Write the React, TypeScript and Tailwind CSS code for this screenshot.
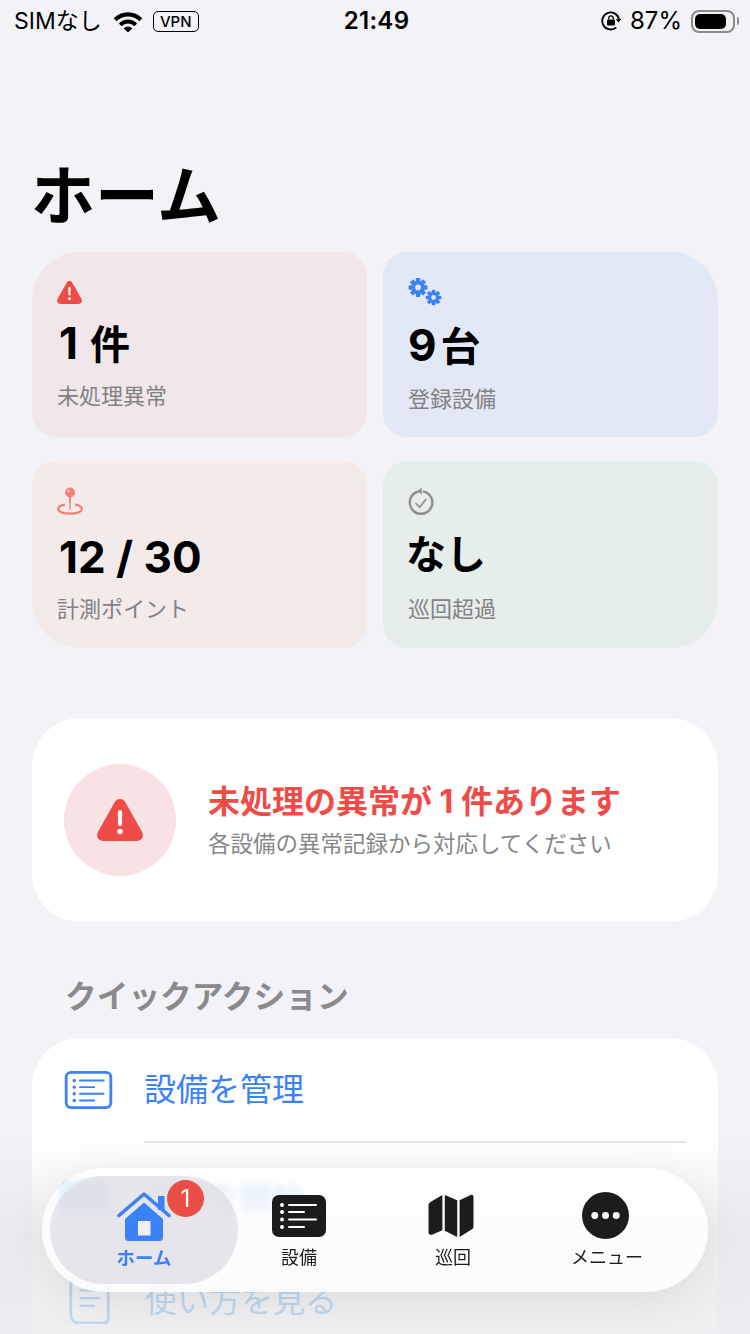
import React from 'react'

const font = 'Inter, "Noto Sans CJK JP", sans-serif'

const TriangleIcon = ({ className }: { className: string }) => (
  <svg viewBox="0 0 46 42" className={className}>
    <path
      d="M23 0c-2.400 0-4.200 1.200-5.500 3.400L1.200 32.600C-1.400 37.200 1.200 42 6.200 42h33.600c5 0 7.600-4.800 5-9.400L28.500 3.400C27.200 1.200 25.400 0 23 0z"
      fill="currentColor"
    />
    <rect x="20.900" y="11" width="4.200" height="16" rx="2.100" fill="white" fillOpacity="0.95" />
    <circle cx="23" cy="32.500" r="2.800" fill="white" fillOpacity="0.95" />
  </svg>
)

const Gear = ({ cx, cy, r }: { cx: number; cy: number; r: number }) => (
  <g>
    {[0, 45, 90, 135].map((a) => (
      <rect
        key={a}
        x={cx - r * 0.28}
        y={cy - r * 1.18}
        width={r * 0.56}
        height={r * 2.36}
        rx={r * 0.12}
        transform={`rotate(${a} ${cx} ${cy})`}
        fill="currentColor"
      />
    ))}
    <circle cx={cx} cy={cy} r={r * 0.85} fill="currentColor" />
    <circle cx={cx} cy={cy} r={r * 0.36} fill="#e2e8f5" />
  </g>
)

const GearsIcon = () => (
  <svg viewBox="0 0 34 28" className="h-[28px] w-[34px] text-[#3b82f6]">
    <Gear cx={10} cy={9.500} r={8} />
    <Gear cx={25.500} cy={19.500} r={6.600} />
  </svg>
)

const PinIcon = () => (
  <svg viewBox="0 0 26 28" className="h-[28px] w-[26px] text-[#f47f78]">
    <circle cx="13" cy="5.500" r="5" fill="currentColor" />
    <circle cx="11.500" cy="4" r="1.200" fill="#fbd5d2" />
    <path d="M11.900 9h2.200l-.6 14h-1z" fill="currentColor" />
    <path
      d="M8 17.600C3.500 18.400 1.200 20 1.200 22c0 2.800 5.200 4.700 11.800 4.700S24.800 24.800 24.800 22c0-2-2.300-3.600-6.800-4.400"
      fill="none"
      stroke="currentColor"
      strokeWidth="2.200"
    />
  </svg>
)

const TimerCheckIcon = () => (
  <svg viewBox="0 0 26 28" className="h-[28px] w-[26px] text-[#8e9190]">
    <path d="M9.500 4.800A11.300 11.300 0 1 0 16 4.600" fill="none" stroke="currentColor" strokeWidth="2.500" strokeLinecap="round" />
    <path d="M13.500 0.500 9.500 4.500l4.500 3z" fill="currentColor" />
    <path d="M8 16.500l3.700 3.800 6.300-8" fill="none" stroke="currentColor" strokeWidth="1.700" strokeLinecap="round" strokeLinejoin="round" />
  </svg>
)

const ListOutline = () => (
  <svg viewBox="0 0 50 40" className="h-[38px] w-[49px]">
    <rect x="1.500" y="1.500" width="47" height="37" rx="5" fill="none" stroke="currentColor" strokeWidth="3" />
    <g fill="currentColor">
      <circle cx="10" cy="10" r="1.800" />
      <circle cx="10" cy="17" r="1.800" />
      <circle cx="10" cy="24" r="1.800" />
      <circle cx="10" cy="31" r="1.800" />
      <rect x="15" y="9" width="27" height="2" rx="1" />
      <rect x="15" y="16" width="17" height="2" rx="1" />
      <rect x="15" y="23" width="27" height="2" rx="1" />
      <rect x="15" y="30" width="17" height="2" rx="1" />
    </g>
  </svg>
)

const ListSolid = () => (
  <svg viewBox="0 0 54 42" className="h-[42px] w-[54px] text-[#1c1c1e]">
    <rect width="54" height="42" rx="7" fill="currentColor" />
    <g fill="white">
      <circle cx="10" cy="10" r="2" />
      <circle cx="10" cy="17" r="2" />
      <circle cx="10" cy="24.500" r="2" />
      <circle cx="10" cy="32" r="2" />
      <rect x="16" y="9" width="29" height="2" rx="1" />
      <rect x="16" y="16" width="17" height="2" rx="1" />
      <rect x="16" y="23.500" width="29" height="2" rx="1" />
      <rect x="16" y="31" width="17" height="2" rx="1" />
    </g>
  </svg>
)

const BookIcon = () => (
  <svg viewBox="0 0 50 48" className="h-[46px] w-[50px]">
    <path d="M4 3a4 4 0 0 1 4-2h31a4 4 0 0 1 4 4v38a4 4 0 0 1-4 4H12a8 8 0 0 1-8-8z" fill="none" stroke="currentColor" strokeWidth="3" />
    <path d="M14 13h20M14 21h20M14 29h14" stroke="currentColor" strokeWidth="2.400" strokeLinecap="round" />
  </svg>
)

const HomeIcon = () => (
  <svg viewBox="0 0 54 50" className="h-[50px] w-[54px] text-[#3b82f6]">
    <rect x="41" y="4" width="6.500" height="14" fill="currentColor" />
    <path d="M27 10.500 8 27v18.500a3.500 3.500 0 0 0 3.500 3.500h31a3.500 3.500 0 0 0 3.500-3.500V27z" fill="currentColor" />
    <rect x="21" y="29" width="12.500" height="14.500" fill="#eef0f4" />
    <path d="M2 23.500 27 2l25 21.500" fill="none" stroke="currentColor" strokeWidth="3.600" strokeLinecap="round" strokeLinejoin="round" />
  </svg>
)

const MapIcon = () => (
  <svg viewBox="0 0 48 46" className="mr-[4px] h-[44px] w-[48px] text-[#1c1c1e]">
    <path d="M15 1 3 8c-1.500.9-2.500 2-2.500 3.500V40c0 2 1.500 3.200 3.500 2.500l11-4.500z" fill="currentColor" />
    <path d="M17.500 1l13 5.500V45l-13-6.500z" fill="currentColor" />
    <path d="M33 6.500 44.500 1c1.800-.7 3 .3 3 2V34c0 1.500-.7 2.600-2 3.200L33 45z" fill="currentColor" />
  </svg>
)

const MoreIcon = () => (
  <svg viewBox="0 0 46 46" className="mr-[4px] h-[47px] w-[47px] text-[#1c1c1e]">
    <circle cx="23" cy="23" r="23" fill="currentColor" />
    <circle cx="12.500" cy="23" r="3.400" fill="white" />
    <circle cx="23" cy="23" r="3.400" fill="white" />
    <circle cx="33.500" cy="23" r="3.400" fill="white" />
  </svg>
)

const StatusBar = () => (
  <div className="flex h-[42px] items-center justify-between pl-[14px] pr-[11px] text-[23px] text-black">
    <div className="flex flex-1 items-center">
      <span className="leading-none">SIMなし</span>
      <svg viewBox="0 0 30 22" className="ml-[11px] h-[21px] w-[30px]">
        <path d="M0 7.500a21 21 0 0 1 30 0l-3 3.200a17 17 0 0 0-24 0z" />
        <path d="M5.400 13a13.400 13.400 0 0 1 19.200 0L21.700 16a9.300 9.300 0 0 0-13.400 0z" />
        <path d="M10.500 18.200a6.300 6.300 0 0 1 9 0L15 22.500z" />
      </svg>
      <span className="ml-[10px] flex h-[21px] w-[46px] items-center justify-center rounded-[5px] border-[1.500px] border-black text-[15px] font-medium leading-none">
        VPN
      </span>
    </div>
    <span className="text-[24px] font-semibold leading-none tracking-[0.3px]">21:49</span>
    <div className="flex flex-1 items-center justify-end">
      <svg viewBox="0 0 20 20" className="h-[20px] w-[20px]">
        <path d="M15.300 16.400A8.500 8.500 0 1 1 18 8" fill="none" stroke="black" strokeWidth="1.800" />
        <path d="M14.800 8h5.400L17.500 11.500z" />
        <rect x="6" y="8.500" width="8" height="6" rx="1" />
        <path d="M7.800 8.500V7a2.200 2.200 0 0 1 4.400 0v1.500" fill="none" stroke="black" strokeWidth="1.300" />
      </svg>
      <span className="ml-[9px] text-[24px] leading-none">87%</span>
      <div className="ml-[9px] flex h-[23px] w-[44px] shrink-0 items-center rounded-[8px] border-2 border-[#8b8b8b] p-[2px]">
        <div className="h-full w-[87%] rounded-[5px] bg-black" />
      </div>
      <div className="ml-[2px] h-[8px] w-[2px] rounded-r-full bg-[#8b8b8b]" />
    </div>
  </div>
)

type Stat = {
  icon: React.ReactNode
  value: React.ReactNode
  label: string
  className: string
  valueClass: string
  labelClass: string
}

const stats: Stat[] = [
  {
    icon: <TriangleIcon className="h-[23px] w-[25px] text-[#ef4c47]" />,
    value: (
      <>
        1<span className="ml-[12px] text-[40px]">件</span>
      </>
    ),
    label: '未処理異常',
    className: 'h-[185px] rounded-3xl rounded-tl-[48px] bg-[#f1e7ea]',
    valueClass: 'mt-[11px] ml-[2px]',
    labelClass: 'mt-[10px]',
  },
  {
    icon: <GearsIcon />,
    value: (
      <>
        9<span className="ml-[4px] text-[40px]">台</span>
      </>
    ),
    label: '登録設備',
    className: 'h-[185px] rounded-3xl rounded-tr-[48px] bg-[#e2e8f5]',
    valueClass: 'mt-[13px]',
    labelClass: 'mt-[11px]',
  },
  {
    icon: <PinIcon />,
    value: '12 / 30',
    label: '計測ポイント',
    className: 'h-[187px] rounded-3xl rounded-bl-[48px] bg-[#f3eaea]',
    valueClass: 'mt-[16px] ml-[2px]',
    labelClass: 'mt-[11px]',
  },
  {
    icon: <TimerCheckIcon />,
    value: <span className="text-[40px]">なし</span>,
    label: '巡回超過',
    className: 'h-[187px] rounded-3xl rounded-br-[48px] bg-[#e6eeec]',
    valueClass: 'mt-[12px] -ml-[2px]',
    labelClass: 'mt-[13px]',
  },
]

export default function App() {
  return (
    <div className="relative h-[1334px] w-[750px] overflow-hidden bg-[#f2f2f7]" style={{ fontFamily: font }}>
      <StatusBar />

      <h1 className="ml-[31px] mt-[116px] text-[64px] font-bold leading-[76px] text-black">ホーム</h1>

      <div className="mx-[32px] mt-[18px] grid grid-cols-2 gap-x-[16px] gap-y-[24px]">
        {stats.map((s) => (
          <div key={s.label} className={`flex flex-col pl-[25px] pt-[26px] ${s.className}`}>
            <div className="flex h-[28px] items-center">{s.icon}</div>
            <div className={`${s.valueClass} text-[44px] font-bold leading-[52px] text-black`}>{s.value}</div>
            <div className={`${s.labelClass} text-[22px] leading-[30px] text-[#808284]`}>{s.label}</div>
          </div>
        ))}
      </div>

      <div className="mx-[32px] mt-[70px] flex h-[204px] items-center rounded-[48px] bg-white pl-[32px]">
        <div className="flex h-[112px] w-[112px] items-center justify-center rounded-full bg-[#f9e2e3]">
          <TriangleIcon className="h-[42px] w-[46px] text-[#ef4c47]" />
        </div>
        <div className="ml-[32px]">
          <div className="text-[32px] font-bold leading-[44px] text-[#ef4c47]">未処理の異常が 1 件あります</div>
          <div className="mt-[3px] text-[22.500px] leading-[34px] text-[#858789]">各設備の異常記録から対応してください</div>
        </div>
      </div>

      <div className="ml-[65px] mt-[53px] text-[31.700px] font-bold leading-[44px] text-[#8a8a8e]">クイックアクション</div>

      <div className="mx-[32px] mt-[19px] h-[340px] rounded-[48px] bg-white">
        <div className="flex h-[103px] items-center pl-[32px] text-[#3b82f6]">
          <ListOutline />
          <span className="ml-[31px] text-[32px] leading-none">設備を管理</span>
        </div>
        <div className="ml-[112px] mr-[32px] h-[2px] bg-[#e5e5ea]" />
        <div className="flex h-[106px] items-center pl-[28px] pt-[6px] text-[#2f97e0]">
          <div className="h-[38px] w-[50px] rounded-[10px] bg-current" />
          <span className="ml-[34px] text-[32px] font-bold leading-none">巡回を開始</span>
        </div>
        <div className="flex h-[104px] items-center pl-[34px] text-[#2f97e0]">
          <BookIcon />
          <span className="ml-[29px] text-[32px] leading-none">使い方を見る</span>
        </div>
      </div>

      {/* fade behind the floating tab bar */}
      <div className="pointer-events-none absolute inset-x-0 bottom-0 h-[200px] bg-gradient-to-b from-[#e6e6ea]/0 via-[#e6e6ea]/65 to-[#ebebef]/80" />

      <div className="absolute left-[42px] top-[1168px] flex h-[124px] w-[666px] items-center rounded-[62px] bg-white/80 px-[8px] shadow-[0_8px_40px_rgba(0,0,0,0.08)] backdrop-blur-[3px]">
        <div className="relative flex h-[108px] w-[188px] flex-col items-center justify-end rounded-[54px] bg-[#dcdce2]/70 pb-[14px]">
          <HomeIcon />
          <span className="mt-[4px] text-[18.500px] font-bold leading-[24px] text-[#3b82f6]">ホーム</span>
          <span className="absolute left-[117px] top-[4px] flex h-[37px] w-[37px] items-center justify-center rounded-full bg-[#ea4c46] text-[24px] leading-none text-white">
            1
          </span>
        </div>
        <div className="flex w-[122px] flex-col items-center justify-end self-stretch pb-[22px]">
          <ListSolid />
          <span className="mt-[9px] text-[18px] leading-[24px] text-[#1c1c1e]">設備</span>
        </div>
        <div className="ml-[32px] flex w-[122px] flex-col items-center justify-end self-stretch pb-[22px]">
          <MapIcon />
          <span className="mt-[8px] text-[18px] leading-[24px] text-[#1c1c1e]">巡回</span>
        </div>
        <div className="ml-[32px] flex w-[122px] flex-col items-center justify-end self-stretch pb-[22px]">
          <MoreIcon />
          <span className="mt-[7px] text-[18px] leading-[24px] text-[#1c1c1e]">メニュー</span>
        </div>
      </div>
    </div>
  )
}
